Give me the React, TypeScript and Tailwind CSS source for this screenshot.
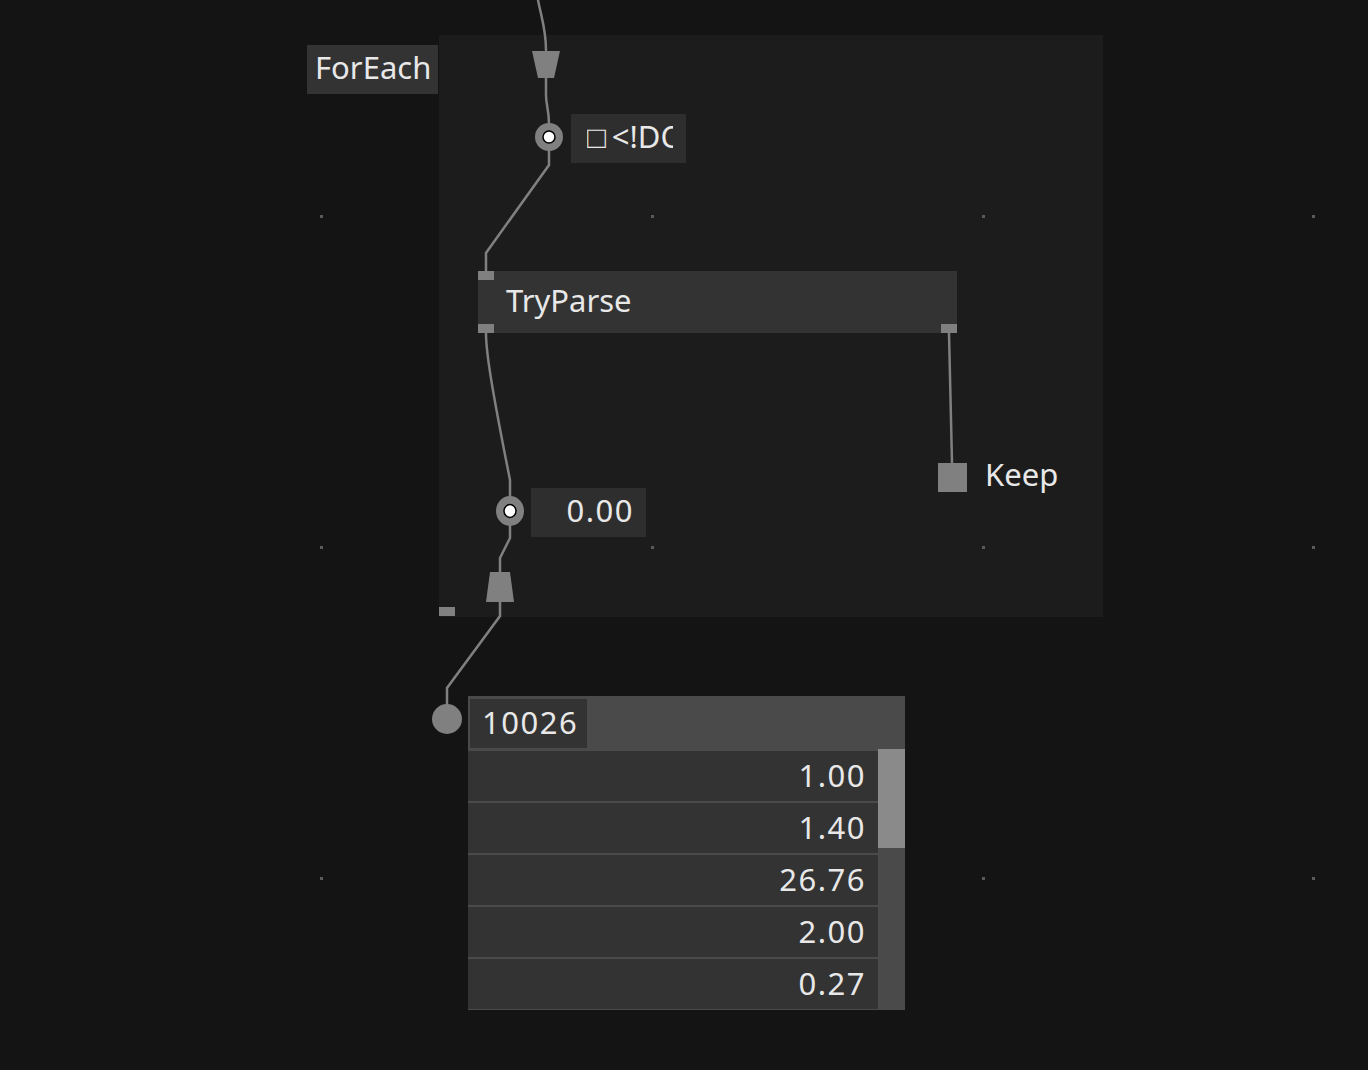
const font = { fontFamily: '"Noto Sans", "Open Sans", sans-serif' }

const rows = ['1.00', '1.40', '26.76', '2.00', '0.27']

const dots: [number, number][] = [
  [321, 216], [652, 216], [983, 216], [1313, 216],
  [321, 547], [652, 547], [983, 547], [1313, 547],
  [321, 878], [983, 878], [1313, 878],
]

function Wires() {
  return (
    <svg className="absolute inset-0" width={1368} height={1070}>
      <g stroke="#808080" strokeWidth={2.5} fill="none" strokeLinecap="round">
        <path d="M538 0 C542 20 546 30 546 50" />
        <path d="M546 78 L546 95 C546 105 549 110 549 124" />
        <path d="M549 150 L549 165 L486 253 L486 271" />
        <path d="M486 333 C486 350 490 380 510 480 L510 498" />
        <path d="M510 524 L510 538 L500 558 L500 572" />
        <path d="M500 602 L500 616 L447 688 L447 705" />
        <path d="M949 333 L952 463" />
      </g>
      {/* input pin (top) */}
      <polygon points="532,51 560,51 554,78 538,78" fill="#808080" />
      {/* output pin (bottom) */}
      <polygon points="490,572 510,572 514,602 486,602" fill="#808080" />
      {/* pads */}
      <circle cx={549} cy={137} r={14} fill="#808080" />
      <circle cx={549} cy={137} r={6} fill="#fff" stroke="#000" strokeWidth={1.5} />
      <ellipse cx={510} cy={511} rx={14} ry={15} fill="#808080" />
      <ellipse cx={510} cy={511} rx={6} ry={6.5} fill="#fff" stroke="#000" strokeWidth={1.5} />
      <circle cx={447} cy={719} r={15} fill="#808080" />
    </svg>
  )
}

export default function App() {
  return (
    <div className="relative w-[1368px] h-[1070px] overflow-hidden bg-[#141414] text-[#e8e8e8] text-[31px] leading-none" style={font}>
      {/* ForEach region */}
      <div className="absolute left-[439px] top-[35px] w-[664px] h-[582px] bg-[#1c1c1c]" />
      <div className="absolute left-[439px] top-[607px] w-[16px] h-[9px] bg-[#808080]" />

      {/* grid dots */}
      {dots.map(([x, y]) => (
        <div
          key={`${x}-${y}`}
          className="absolute w-[3px] h-[3px] bg-[#5a5a5a]"
          style={{ left: x - 1, top: y - 1 }}
        />
      ))}

      <div className="absolute left-[307px] top-[45px] h-[49px] w-[131px] bg-[#333333] flex items-center pl-[8px] pb-[5px]">
        ForEach
      </div>

      {/* string iobox, text clipped by the box */}
      <div className="absolute left-[571px] top-[114px] h-[49px] w-[115px] bg-[#2e2e2e] flex items-center pl-[16px] pr-[13px] pb-[4px]">
        <div className="flex-1 overflow-hidden whitespace-nowrap flex items-center">
          <span>□</span>
          <span className="ml-[6px]">&lt;!DOCTYPE</span>
        </div>
      </div>

      {/* TryParse node */}
      <div className="absolute left-[478px] top-[271px] w-[479px] h-[62px] bg-[#333333] flex items-center pl-[28px] pb-[4px]">
        TryParse
        <div className="absolute left-0 top-0 w-[16px] h-[9px] bg-[#808080]" />
        <div className="absolute left-0 bottom-0 w-[16px] h-[9px] bg-[#808080]" />
        <div className="absolute right-0 bottom-0 w-[16px] h-[9px] bg-[#808080]" />
      </div>

      {/* value iobox */}
      <div className="absolute left-[531px] top-[488px] h-[49px] w-[115px] bg-[#2e2e2e] flex items-center justify-end pr-[12px] pb-[4px] tracking-[1.5px]">
        0.00
      </div>

      {/* Keep output */}
      <div className="absolute left-[938px] top-[463px] w-[29px] h-[29px] bg-[#808080]" />
      <div className="absolute left-[985px] top-[454px] leading-[40px]">Keep</div>

      <Wires />

      {/* spread iobox */}
      <div className="absolute left-[468px] top-[696px] w-[437px] h-[314px] bg-[#4a4a4a] flex flex-col tracking-[1.5px]">
        <div className="h-[53px] flex items-start pt-[3px] pl-[2px]">
          <div className="h-[49px] w-[117px] bg-[#333333] flex items-center pl-[12px] pb-[3px]">
            10026
          </div>
        </div>
        <div className="flex flex-1">
          <div className="flex flex-col gap-[2px] w-[410px] pt-[2px]">
            {rows.map(v => (
              <div key={v} className="h-[50px] bg-[#333333] flex items-center justify-end pr-[12px] pb-[2px]">
                {v}
              </div>
            ))}
          </div>
          <div className="flex-1 flex flex-col">
            <div className="h-[99px] bg-[#8a8a8a]" />
          </div>
        </div>
      </div>
    </div>
  )
}
